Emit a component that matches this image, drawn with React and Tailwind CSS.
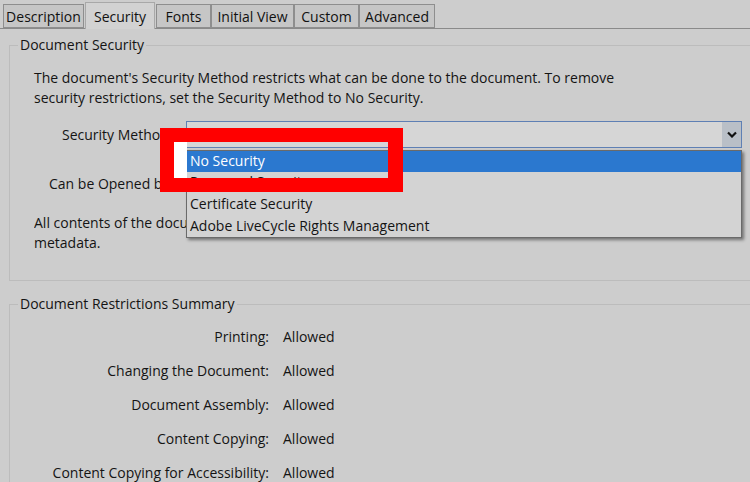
import React from "react";

const font = { fontFamily: '"Open Sans", "Noto Sans", sans-serif' };

const tabs = [
  { label: "Description", w: "w-[81px]" },
  { label: "Security", w: "w-[70px]", active: true },
  { label: "Fonts", w: "w-[55px]" },
  { label: "Initial View", w: "w-[83px]" },
  { label: "Custom", w: "w-[65px]" },
  { label: "Advanced", w: "w-[76px]" },
];

const restrictions = [
  "Printing:",
  "Changing the Document:",
  "Document Assembly:",
  "Content Copying:",
  "Content Copying for Accessibility:",
];

const Tab = ({ label, w, active }) =>
  active ? (
    <div
      className={`${w} h-[27px] -mb-px mx-[1px] bg-[#d2d2d2] border border-b-0 border-[#a8a8a8] flex items-center justify-center text-[14px] text-[#111] z-10`}
    >
      {label}
    </div>
  ) : (
    <div
      className={`${w} h-[24px] bg-[#c6c6c6] border border-[#8e8e8e] flex items-center justify-center text-[14px] text-[#111]`}
    >
      {label}
    </div>
  );

export default function App() {
  return (
    <div
      className="w-[750px] h-[482px] bg-[#cdcdcd] overflow-hidden relative text-[#141414]"
      style={font}
    >
      {/* Tabs */}
      <div className="flex items-end pl-[3px] pt-[2px] border-b border-[#8a8a8a] h-[29px]">
        {tabs.map((t) => (
          <Tab key={t.label} {...t} />
        ))}
      </div>

      {/* Document Security group */}
      <div className="ml-[9px] mt-[16px] h-[236px] border border-r-0 border-[#bcbcbc] relative">
        <div className="absolute -top-[11px] left-[8px] px-[2px] bg-[#cdcdcd] text-[14px] leading-[20px]">
          Document Security
        </div>
        <div className="pl-[24px] pt-[22px] text-[14px] leading-[20px]">
          <p>
            The document's Security Method restricts what can be done to the
            document. To remove
            <br />
            security restrictions, set the Security Method to No Security.
          </p>
          <div className="flex items-center h-[28px] mt-[13px] pl-[28px]">
            <span className="w-[98px] overflow-hidden whitespace-nowrap">Security Method:</span>
          </div>
          <div className="flex items-center h-[22px] mt-[24px] pl-[15px]">
            <span className="w-[111px] overflow-hidden whitespace-nowrap">Can be Opened by:</span>
          </div>
          <div className="mt-[18px]">
            <div className="w-[152px] overflow-hidden whitespace-nowrap">
              All contents of the document are encrypted
            </div>
            <div>metadata.</div>
          </div>
        </div>
      </div>

      {/* Document Restrictions Summary group */}
      <div className="ml-[9px] mt-[23px] h-[200px] border border-r-0 border-b-0 border-[#bcbcbc] relative">
        <div className="absolute -top-[11px] left-[8px] px-[2px] bg-[#cdcdcd] text-[14px] leading-[20px]">
          Document Restrictions Summary
        </div>
        <div className="pt-[22px] flex flex-col gap-[14px] text-[14px] leading-[20px]">
          {restrictions.map((r) => (
            <div key={r} className="flex">
              <span className="w-[259px] text-right">{r}</span>
              <span className="pl-[14px]">Allowed</span>
            </div>
          ))}
        </div>
      </div>

      {/* Select box */}
      <div className="absolute left-[186px] top-[121px] w-[556px] h-[27px] border border-[#5f80b4] bg-[#d6d6d6] flex justify-end">
        <div className="w-[19px] h-full bg-[#b9bfc7] flex items-center justify-center">
          <svg width="10" height="7" viewBox="0 0 10 7">
            <path d="M1 1.5 L5 5.5 L9 1.5" stroke="#111" strokeWidth="2.2" fill="none" />
          </svg>
        </div>
      </div>

      {/* Dropdown list */}
      <div className="absolute left-[186px] top-[150px] w-[556px] h-[88px] bg-[#d3d3d3] border border-[#6a6a6a] shadow-[2px_2px_3px_rgba(0,0,0,0.45)] text-[14px] leading-[20px]">
        <div className="h-[21px] bg-[#2b78cf] text-white flex items-center pl-[3px] pb-[2px]">
          No Security
        </div>
        <div className="h-[22px] flex items-center pl-[3px] pb-[3px]">Password Security</div>
        <div className="h-[22px] flex items-center pl-[3px] pb-[3px]">Certificate Security</div>
        <div className="h-[22px] flex items-center pl-[3px] pb-[3px]">Adobe LiveCycle Rights Management</div>
      </div>

      {/* Red highlight box */}
      <div className="absolute left-[160px] top-[128px] w-[243px] h-[64px] border-[14px] border-[#ff0000] border-r-[15px]">
        <div className="w-[13px] h-full bg-white" />
      </div>
    </div>
  );
}
